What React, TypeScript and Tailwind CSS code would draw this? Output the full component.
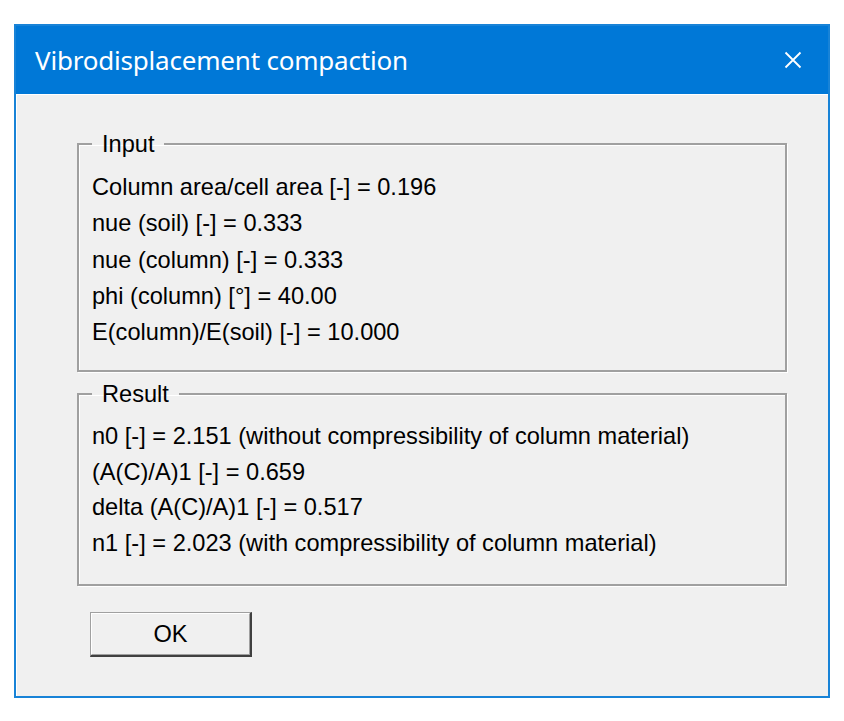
import React from "react";

const input = [
  "Column area/cell area [-] = 0.196",
  "nue (soil) [-] = 0.333",
  "nue (column) [-] = 0.333",
  "phi (column) [°] = 40.00",
  "E(column)/E(soil) [-] = 10.000",
];

const result = [
  "n0 [-] = 2.151 (without compressibility of column material)",
  "(A(C)/A)1 [-] = 0.659",
  "delta (A(C)/A)1 [-] = 0.517",
  "n1 [-] = 2.023 (with compressibility of column material)",
];

function Group({
  title,
  lines,
  className,
  lineClass,
}: {
  title: string;
  lines: string[];
  className: string;
  lineClass: string;
}) {
  return (
    <fieldset
      className={`ml-[61px] mr-[41px] border-2 border-[#a0a0a0] pl-[13px] pt-[11px] shadow-[inset_1px_1px_0_#fff,1px_1px_0_#fff] ${className}`}
    >
      <legend className="px-[10px] leading-[28px]">{title}</legend>
      {lines.map((l) => (
        <div key={l} className={`whitespace-nowrap ${lineClass}`}>
          {l}
        </div>
      ))}
    </fieldset>
  );
}

export default function App() {
  return (
    <div className="h-[721px] w-[844px] bg-white pl-[14px] pt-[24px]">
      <div className="flex h-[674px] w-[816px] flex-col border-2 border-[#1883d7]">
        {/* title bar */}
        <div className="flex h-[68px] items-center justify-between bg-[#0078d7] pl-[19px] pr-[26px] text-white">
          <span className="font-['Noto_Sans',sans-serif] text-[26px] tracking-[-0.2px]">
            Vibrodisplacement compaction
          </span>
          <svg width="18" height="18" viewBox="0 0 18 18">
            <path d="M1.5 1.5 L16.5 16.5 M16.5 1.5 L1.5 16.5" stroke="#fff" strokeWidth="1.8" />
          </svg>
        </div>

        {/* body */}
        <div className="flex-1 bg-[#f0f0f0] pt-[36px] font-['Liberation_Sans',Arial,sans-serif] text-[23.6px] text-black shadow-[inset_1px_1px_0_#fff]">
          <Group title="Input" lines={input} className="pb-[20px]" lineClass="leading-[36.3px]" />
          <Group title="Result" lines={result} className="mt-[8px] pb-[23px]" lineClass="leading-[35.5px]" />

          <div className="ml-[74px] mt-[26px]">
            <button className="h-[45px] w-[162px] border-t border-l border-[#a0a0a0] border-r-2 border-b-2 border-r-[#404040] border-b-[#404040] bg-[#f0f0f0]">
              <div className="flex h-full w-full items-center justify-center border-t border-l border-white border-r border-b border-r-[#a0a0a0] border-b-[#a0a0a0] leading-none">
                OK
              </div>
            </button>
          </div>
        </div>
      </div>
    </div>
  );
}
